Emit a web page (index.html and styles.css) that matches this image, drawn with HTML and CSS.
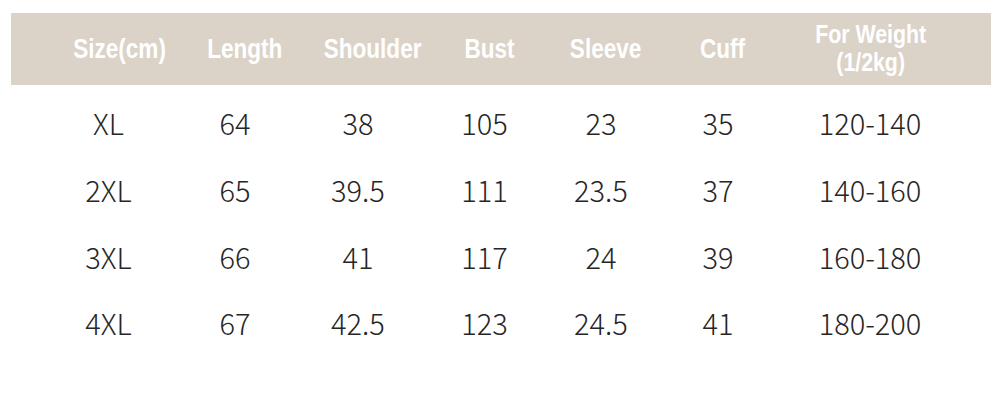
FILE: index.html
```html
<!DOCTYPE html>
<html lang="en">
<head>
<meta charset="utf-8">
<title>Size chart</title>
<link rel="stylesheet" href="styles.css">
</head>
<body>
<div class="chart">
  <div class="head">
    <div class="hcell"><span class="narrow">Size(cm)</span></div>
    <div class="hcell"><span class="narrow">Length</span></div>
    <div class="hcell"><span class="narrow">Shoulder</span></div>
    <div class="hcell"><span class="narrow">Bust</span></div>
    <div class="hcell"><span class="narrow">Sleeve</span></div>
    <div class="hcell"><span class="narrow">Cuff</span></div>
    <div class="hcell two"><span class="narrow">For Weight<br>(1/2kg)</span></div>
  </div>
  <div class="body">
    <div class="row"><span>XL</span><span>64</span><span>38</span><span>105</span><span>23</span><span>35</span><span>120-140</span></div>
    <div class="row"><span>2XL</span><span>65</span><span>39.5</span><span>111</span><span>23.5</span><span>37</span><span>140-160</span></div>
    <div class="row"><span>3XL</span><span>66</span><span>41</span><span>117</span><span>24</span><span>39</span><span>160-180</span></div>
    <div class="row"><span>4XL</span><span>67</span><span>42.5</span><span>123</span><span>24.5</span><span>41</span><span>180-200</span></div>
  </div>
  <div class="foot"></div>
</div>
</body>
</html>
```
FILE: styles.css
```css
html, body {
  margin: 0;
  padding: 0;
  background: #ffffff;
}
.chart {
  width: 1000px;
  height: 416px;
  overflow: hidden;
  padding-top: 13px;
  box-sizing: border-box;
}
.head {
  margin: 0 9px 0 11px;
  height: 72px;
  background: #dbd3c8;
  display: grid;
  grid-template-columns: 149px 101px 155px 80px 152px 80px 218px;
  padding-left: 34px;
  align-items: center;
  color: #ffffff;
  font-family: "Liberation Sans", Arial, sans-serif;
  font-weight: bold;
  font-size: 27.5px;
  line-height: 30px;
}
.hcell {
  text-align: center;
  white-space: nowrap;
}
.narrow {
  display: inline-block;
  transform: scaleX(0.82);
}
.hcell.two {
  font-size: 26px;
  line-height: 28px;
  padding-bottom: 3px;
}
.body {
  padding-top: 4px;
  display: flex;
  flex-direction: column;
}
.row {
  display: grid;
  grid-template-columns: 127px 126px 120px 133px 100px 134px 170px;
  padding-left: 45px;
  height: 66.7px;
  align-items: center;
  font-family: "Noto Sans CJK SC", "Noto Sans", sans-serif;
  font-weight: 300;
  font-size: 29px;
  color: #262626;
}
.row span {
  text-align: center;
}
.foot {
  margin: 58px 10px 0;
  height: 6px;
  background: linear-gradient(#ffffff, #fbfaf2);
}
```
